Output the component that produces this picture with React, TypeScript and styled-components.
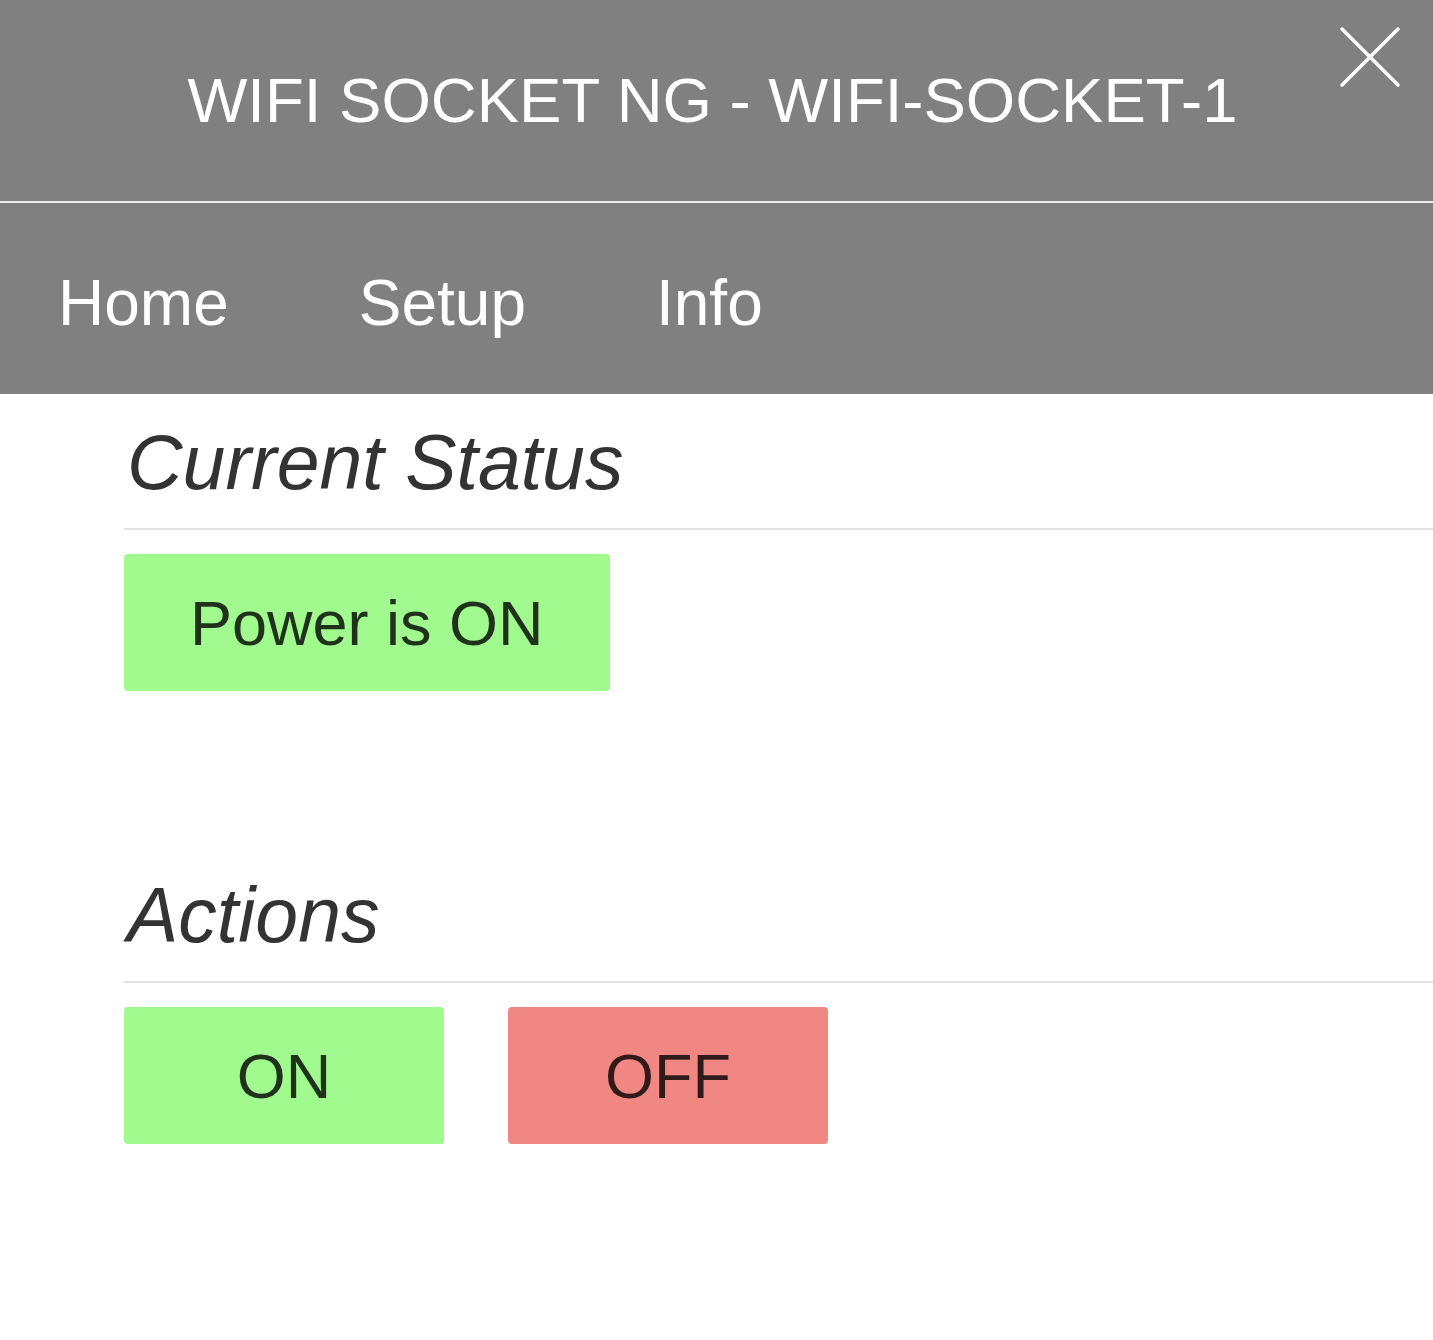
import styled, { createGlobalStyle } from "styled-components";

const GlobalStyle = createGlobalStyle`
    html, body {
        margin: 0;
        padding: 0;
        background: #ffffff;
        font-family: "Liberation Sans", Arial, Helvetica, sans-serif;
    }
`;

const Header = styled.header`
    position: relative;
    box-sizing: border-box;
    height: 203px;
    padding-top: 64px;
    background: #808080;
    border-bottom: 2px solid #eeeeee;
`;

const Title = styled.h1`
    margin: 0;
    padding-right: 8px;
    font-size: 63.5px;
    font-weight: 400;
    line-height: 72px;
    color: #ffffff;
    text-align: center;
    white-space: nowrap;
`;

const CloseButton = styled.button`
    position: absolute;
    top: 26px;
    right: 32px;
    width: 62px;
    height: 62px;
    padding: 0;
    border: none;
    background: transparent;
    cursor: pointer;
`;

const Nav = styled.nav`
    box-sizing: border-box;
    height: 191px;
    padding: 64px 0 0 58px;
    display: flex;
    gap: 130px;
    background: #808080;
`;

const NavLink = styled.a`
    font-size: 64px;
    line-height: 72px;
    color: #ffffff;
    text-decoration: none;
    cursor: pointer;
`;

const Main = styled.main`
    padding-left: 124px;
`;

const Section = styled.section<{ $gapTop: number }>`
    padding-top: ${(p) => p.$gapTop}px;
`;

const SectionTitle = styled.h2`
    margin: 0 0 24px;
    padding: 0 0 22px 3px;
    font-size: 77px;
    font-style: italic;
    font-weight: 400;
    line-height: 88px;
    color: #333333;
    border-bottom: 2px solid #e3e3e3;
`;

const ButtonRow = styled.div`
    display: flex;
    gap: 64px;
`;

const StateButton = styled.button<{ $tone: "on" | "off"; $wide?: boolean }>`
    box-sizing: border-box;
    height: 137px;
    ${(p) => (p.$wide ? "padding: 0 66px;" : "width: 320px; padding: 0;")}
    border: none;
    border-radius: 4px;
    background: ${(p) => (p.$tone === "on" ? "#a0fa8e" : "#f08782")};
    color: rgba(0, 0, 0, 0.8);
    font-family: "Liberation Sans", Arial, Helvetica, sans-serif;
    font-size: 63px;
    line-height: 72px;
    cursor: pointer;
`;

const App = () => {
    return (
        <>
            <GlobalStyle />
            <Header>
                <Title>WIFI SOCKET NG - WIFI-SOCKET-1</Title>
                <CloseButton aria-label="Close">
                    <svg width="62" height="62" viewBox="0 0 62 62">
                        <path d="M3 3 L59 59 M59 3 L3 59" stroke="#ffffff" strokeWidth="3.5" strokeLinecap="round" />
                    </svg>
                </CloseButton>
            </Header>
            <Nav>
                <NavLink>Home</NavLink>
                <NavLink>Setup</NavLink>
                <NavLink>Info</NavLink>
            </Nav>
            <Main>
                <Section $gapTop={24}>
                    <SectionTitle>Current Status</SectionTitle>
                    <StateButton $tone="on" $wide>Power is ON</StateButton>
                </Section>
                <Section $gapTop={180}>
                    <SectionTitle>Actions</SectionTitle>
                    <ButtonRow>
                        <StateButton $tone="on">ON</StateButton>
                        <StateButton $tone="off">OFF</StateButton>
                    </ButtonRow>
                </Section>
            </Main>
        </>
    );
};

export default App;
